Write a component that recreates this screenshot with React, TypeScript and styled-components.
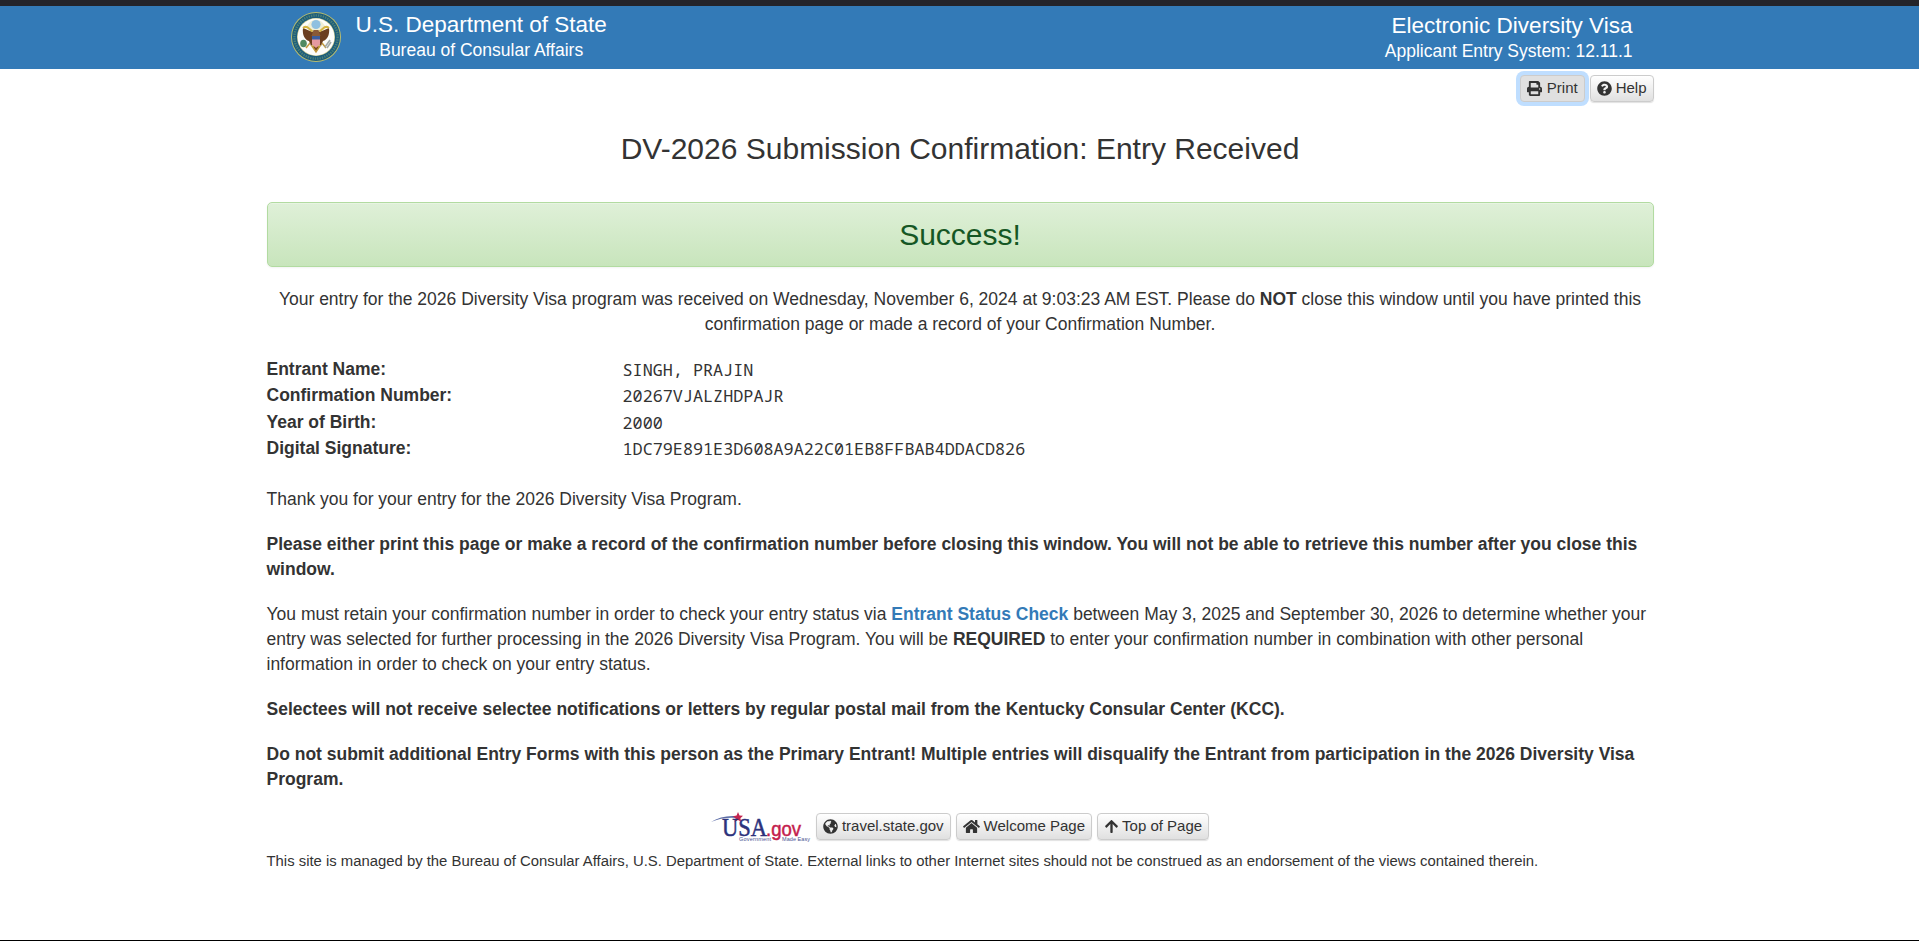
import React from "react";
import styled, { createGlobalStyle } from "styled-components";
import { FaPrint, FaQuestionCircle, FaGlobeAmericas, FaHome, FaArrowUp } from "react-icons/fa";

const GlobalStyle = createGlobalStyle`
  *, *::before, *::after { box-sizing: border-box; }
  body {
    margin: 0;
    background: #fff;
    color: #333;
    font-family: "Liberation Sans", Arial, sans-serif;
    font-size: 17.5px;
    line-height: 25px;
  }
`;

const Page = styled.div`
  height: 941px;
  display: flex;
  flex-direction: column;
  border-top: 6px solid #24242a;
  border-bottom: 1px solid #000;
  overflow: hidden;
`;

const Header = styled.header`
  height: 63px;
  flex: none;
  background: #337ab7;
  color: #fff;
`;

const HeaderInner = styled.div`
  width: 1346px;
  margin: 0 auto;
  display: flex;
  justify-content: space-between;
  padding: 6px 0 0 4px;
`;

const Brand = styled.div`
  display: flex;
  gap: 15px;
`;

const Titles = styled.div<{ $align: "center" | "right" }>`
  text-align: ${(p) => p.$align};
  padding-top: ${(p) => (p.$align === "right" ? 1 : 0)}px;
`;

const TitleLine = styled.div`
  font-size: 22.5px;
  line-height: 26px;
`;

const SubtitleLine = styled.div`
  font-size: 17.5px;
  line-height: 25px;
`;

const Content = styled.main`
  width: 1388px;
  margin: 0 auto;
  padding-left: 1px;
`;

const TopButtons = styled.div`
  display: flex;
  justify-content: flex-end;
  gap: 5px;
  padding-top: 6px;
`;

const Button = styled.button<{ $focused?: boolean }>`
  display: inline-flex;
  align-items: center;
  gap: 4px;
  height: 27px;
  padding: 0 6px 1px;
  border: 1px solid #ccc;
  border-radius: 4px;
  background: ${(p) => (p.$focused ? "#e0e0e0" : "linear-gradient(#fff, #e0e0e0)")};
  box-shadow: ${(p) => (p.$focused ? "0 0 0 4px #bfdeff" : "0 1px 1px rgba(0, 0, 0, 0.12)")};
  color: #333;
  font: 15px/22px "Liberation Sans", Arial, sans-serif;
  white-space: nowrap;
`;

const PrintButton = styled(Button)`
  gap: 5px;
`;

const TopOfPageButton = styled(Button)`
  gap: 3px;
`;

const HomeIcon = styled(FaHome)`
  width: 17px;
  height: 15px;
`;

const Heading = styled.h1`
  margin: 30px 0 0;
  font-size: 30px;
  font-weight: 400;
  line-height: 33px;
  text-align: center;
`;

const Alert = styled.div`
  height: 65px;
  margin-top: 37px;
  border: 1px solid #b2dba1;
  border-radius: 5px;
  background: linear-gradient(#dff0d8, #c8e5bc);
  box-shadow: inset 0 1px 0 rgba(255, 255, 255, 0.25), 0 1px 2px rgba(0, 0, 0, 0.05);
  color: #155724;
  font-size: 30px;
  line-height: 63px;
  text-align: center;
`;

const Intro = styled.p`
  margin: 20px 0 0;
  text-align: center;
`;

const Details = styled.dl`
  display: grid;
  grid-template-columns: 356px 1fr;
  grid-auto-rows: 26.4px;
  margin: 20px 0 24.4px;
`;

const Term = styled.dt`
  font-weight: 700;
`;

const Value = styled.dd`
  margin: 0;
  font-family: "Noto Sans Mono", "Liberation Mono", monospace;
  font-size: 16.8px;
`;

const Paragraph = styled.p`
  margin: 20px 0 0;
`;

const StatusLink = styled.a`
  color: #337ab7;
  font-weight: 700;
  text-decoration: none;
`;

const FooterLinks = styled.div`
  display: flex;
  justify-content: center;
  align-items: center;
  gap: 5px;
  margin-top: 20px;
`;

const Notice = styled.p`
  margin: 9px 0 0;
  font-size: 14.87px;
  line-height: 21px;
`;

const Seal = () => (
  <svg width="50" height="50" viewBox="0 0 50 50">
    <circle cx="25" cy="25" r="25" fill="#b9bd6d" />
    <circle cx="25" cy="25" r="24" fill="#1c5c7c" />
    <circle cx="25" cy="25" r="21.6" fill="none" stroke="#4b8078" strokeWidth="2.4" strokeDasharray="1.3 1.1" />
    <circle cx="25" cy="25" r="19" fill="#c8c88a" />
    <circle cx="25" cy="25" r="18.4" fill="#fdfdfb" />
    <path d="M19 10q6-5 12 0l4 5-4 5H19l-4-5z" fill="#f0eed6" />
    <circle cx="25" cy="12.500" r="4.600" fill="#8fc0e0" />
    <path d="M12 16c-1 7 2 12 6 13l2 5 3-3V20l-4-1zM38 16c1 7-2 12-6 13l-2 5-3-3V20l4-1z" fill="#6b3e20" />
    <path d="M12 16q3-2.500 6 .5l3.500 3M38 16q-3-2.500-6 .5l-3.500 3" stroke="#d6b443" strokeWidth="2" fill="none" />
    <path d="M22.500 18h5l2 6h-9z" fill="#8a5a35" />
    <path d="M19 31l-4 5M31 31l4 5M21 34l4 6 4-6z" stroke="#c39a3e" strokeWidth="1.500" fill="#73471f" />
    <path d="M21 24h8v8l-4 4-4-4z" fill="#e59aa0" />
    <path d="M21 24h8v3.500h-8z" fill="#3c5d9c" />
    <ellipse cx="12.500" cy="31.500" rx="3.300" ry="3.800" fill="#4f8a62" />
    <path d="M34 35l5-7M36 36l4-6" stroke="#a2a9a8" strokeWidth="1.600" />
  </svg>
);

const UsaGov = () => (
  <svg width="100" height="30" viewBox="0 0 100 30">
    <path d="M0 10Q12 2 30 4.500L27 6Q12 4.500 0 10Z" fill="#5a6ba5" />
    <path d="M27 0l1.500 3.500 3.500.3-2.600 2.500.8 3.400-3.200-1.800-3.400 2 1-3.700-2.800-2 3.800-.7z" fill="#c4244f" />
    <text x="11" y="24" textLength="45" lengthAdjust="spacingAndGlyphs" fontFamily="Liberation Serif" fontSize="25" fill="#2c327c" stroke="#2c327c" strokeWidth="0.5">USA</text>
    <text x="55" y="24" textLength="35" lengthAdjust="spacingAndGlyphs" fontFamily="Liberation Sans" fontSize="21" fill="#c4204c" stroke="#c4204c" strokeWidth="0.5">.gov</text>
    <text x="28" y="29" textLength="32" fontFamily="Liberation Sans" fontSize="5.500" fill="#4a5493">Government</text>
    <text x="71" y="29" textLength="28" fontFamily="Liberation Sans" fontSize="5.500" fill="#4a5493">Made Easy</text>
  </svg>
);

const details = [
  ["Entrant Name:", "SINGH, PRAJIN"],
  ["Confirmation Number:", "20267VJALZHDPAJR"],
  ["Year of Birth:", "2000"],
  ["Digital Signature:", "1DC79E891E3D608A9A22C01EB8FFBAB4DDACD826"],
];

export default function App() {
  return (
    <Page>
      <GlobalStyle />
      <Header>
        <HeaderInner>
          <Brand>
            <Seal />
            <Titles $align="center">
              <TitleLine>U.S. Department of State</TitleLine>
              <SubtitleLine>Bureau of Consular Affairs</SubtitleLine>
            </Titles>
          </Brand>
          <Titles $align="right">
            <TitleLine>Electronic Diversity Visa</TitleLine>
            <SubtitleLine>Applicant Entry System: 12.11.1</SubtitleLine>
          </Titles>
        </HeaderInner>
      </Header>
      <Content>
        <TopButtons>
          <PrintButton $focused><FaPrint />Print</PrintButton>
          <Button><FaQuestionCircle />Help</Button>
        </TopButtons>
        <Heading>DV-2026 Submission Confirmation: Entry Received</Heading>
        <Alert>Success!</Alert>
        <Intro>
          Your entry for the 2026 Diversity Visa program was received on Wednesday, November 6, 2024 at 9:03:23 AM EST.
          Please do <b>NOT</b> close this window until you have printed this confirmation page or made a record of your
          Confirmation Number.
        </Intro>
        <Details>
          {details.map(([term, value]) => (
            <React.Fragment key={term}>
              <Term>{term}</Term>
              <Value>{value}</Value>
            </React.Fragment>
          ))}
        </Details>
        <Paragraph>Thank you for your entry for the 2026 Diversity Visa Program.</Paragraph>
        <Paragraph>
          <b>
            Please either print this page or make a record of the confirmation number before closing this window. You
            will not be able to retrieve this number after you close this window.
          </b>
        </Paragraph>
        <Paragraph>
          You must retain your confirmation number in order to check your entry status via{" "}
          <StatusLink href="#">Entrant Status Check</StatusLink> between May 3, 2025 and September 30, 2026 to determine
          whether your entry was selected for further processing in the 2026 Diversity Visa Program. You will be{" "}
          <b>REQUIRED</b> to enter your confirmation number in combination with other personal information in order to
          check on your entry status.
        </Paragraph>
        <Paragraph>
          <b>
            Selectees will not receive selectee notifications or letters by regular postal mail from the Kentucky
            Consular Center (KCC).
          </b>
        </Paragraph>
        <Paragraph>
          <b>
            Do not submit additional Entry Forms with this person as the Primary Entrant! Multiple entries will
            disqualify the Entrant from participation in the 2026 Diversity Visa Program.
          </b>
        </Paragraph>
        <FooterLinks>
          <UsaGov />
          <Button><FaGlobeAmericas />travel.state.gov</Button>
          <Button><HomeIcon />Welcome Page</Button>
          <TopOfPageButton><FaArrowUp />Top of Page</TopOfPageButton>
        </FooterLinks>
        <Notice>
          This site is managed by the Bureau of Consular Affairs, U.S. Department of State. External links to other
          Internet sites should not be construed as an endorsement of the views contained therein.
        </Notice>
      </Content>
    </Page>
  );
}
